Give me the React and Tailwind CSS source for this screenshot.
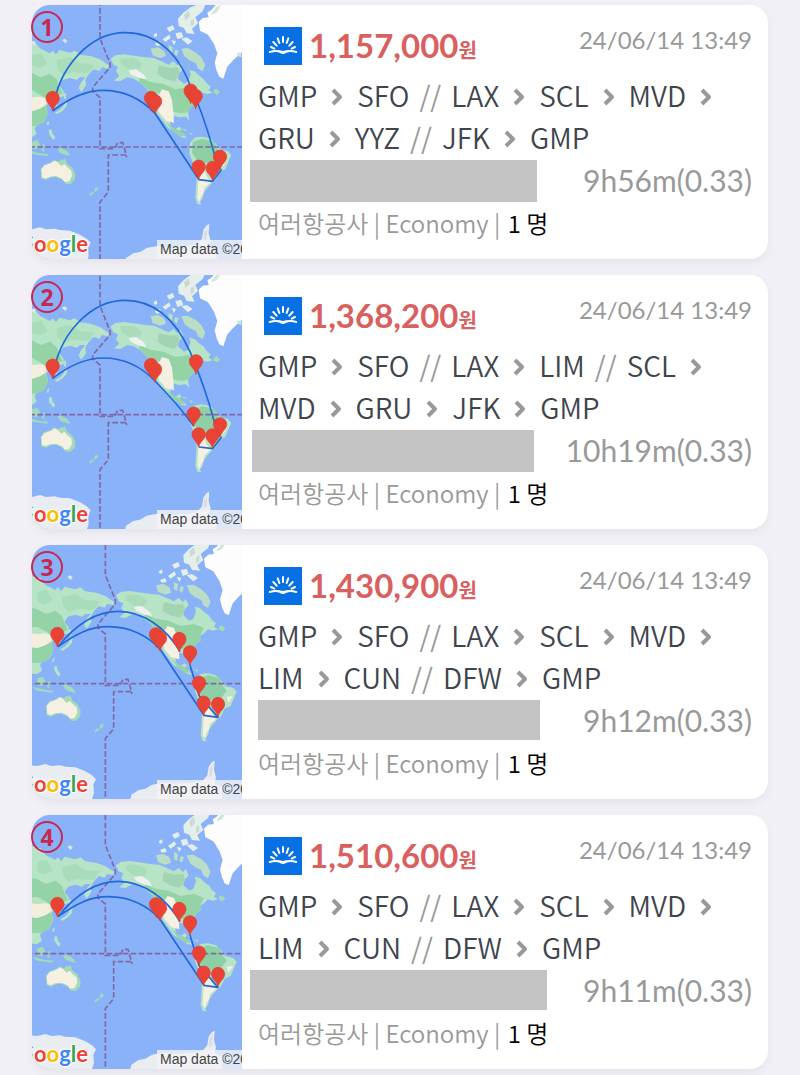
const PACIFIC_WEST = { x: 0, y: 0 }
const PACIFIC_LOW = { x: 0, y: -7 }
const PACIFIC_EAST = { x: 16, y: -10 }

const northernLoop = {
    pins: [[98, 294], [393, 294], [405, 304], [512, 272], [527, 288], [536, 500], [578, 504], [600, 470]],
    lines: [
        'M98 333C115 195 215 98 315 98C400 98 470 150 510 255Q550 340 583 462L600 508',
        'M98 333C150 292 200 271 250 271C310 271 365 298 405 340L537 539L578 544L605 508',
    ],
}

const limaLoop = {
    pins: [[98, 287], [393, 285], [405, 298], [528, 274], [521, 431], [536, 493], [577, 496], [600, 463]],
    lines: [
        'M98 325C115 188 215 91 315 91C400 91 465 145 510 245Q553 345 583 455L600 500',
        'M98 325C150 285 200 264 250 264C310 264 365 291 405 333Q470 398 521 468',
        'M537 531L578 536L605 500',
    ],
}

const cancunLoop = {
    pins: [[112, 282], [408, 283], [420, 294], [478, 297], [510, 337], [537, 428], [551, 488], [594, 492]],
    lines: [
        'M114 320C170 250 230 214 295 214C370 214 440 265 480 335',
        'M114 320C170 280 210 260 265 260C330 260 385 288 420 328L552 526L594 532L537 466L510 375',
    ],
}

const tickets = [
    {
        id: 1,
        price: '1,157,000',
        duration: '9h56m(0.33)',
        route: ['GMP', '>', 'SFO', '//', 'LAX', '>', 'SCL', '>', 'MVD', '>', 'GRU', '>', 'YYZ', '//', 'JFK', '>', 'GMP'],
        mask: '-ml-2 h-[42px] w-[287px]',
        view: PACIFIC_WEST,
        trip: northernLoop,
    },
    {
        id: 2,
        price: '1,368,200',
        duration: '10h19m(0.33)',
        route: ['GMP', '>', 'SFO', '//', 'LAX', '>', 'LIM', '//', 'SCL', '>', 'MVD', '>', 'GRU', '>', 'JFK', '>', 'GMP'],
        mask: '-ml-1.5 h-[42px] w-[282px]',
        view: PACIFIC_LOW,
        trip: limaLoop,
    },
    {
        id: 3,
        price: '1,430,900',
        duration: '9h12m(0.33)',
        route: ['GMP', '>', 'SFO', '//', 'LAX', '>', 'SCL', '>', 'MVD', '>', 'LIM', '>', 'CUN', '//', 'DFW', '>', 'GMP'],
        mask: 'h-[40px] w-[282px]',
        view: PACIFIC_EAST,
        trip: cancunLoop,
    },
    {
        id: 4,
        price: '1,510,600',
        duration: '9h11m(0.33)',
        route: ['GMP', '>', 'SFO', '//', 'LAX', '>', 'SCL', '>', 'MVD', '>', 'LIM', '>', 'CUN', '//', 'DFW', '>', 'GMP'],
        mask: '-ml-2 h-[40px] w-[297px]',
        view: PACIFIC_EAST,
        trip: cancunLoop,
    },
]

function Land() {
    return (
        <>
            {/* Asia */}
            <path fill="#b7e3c6" d="M-20 105L20 118L45 128L62 146L90 160L98 152L108 163L118 150L150 158L165 152L180 164L212 168L240 178L268 197L262 206L246 202L238 213L220 208L205 225L196 240L198 256L184 276L176 264L184 246L196 232L180 232L170 240L150 234L128 240L118 256L130 272L132 288L122 292L108 290L104 302L112 318L101 322L92 308L78 316L84 340L72 366L52 376L44 384L50 402L36 412L-20 410Z" />
            <path fill="#93d3a6" d="M-20 205L36 218L62 232L90 222L110 238L118 260L128 280L104 290L86 300L70 290L36 270L-20 275ZM-20 318L36 330L76 316L84 340L72 366L48 378L-20 380Z" />
            <path fill="#a9dcba" d="M110 180L150 172L180 190L222 194L206 220L160 216L130 226L112 205ZM36 165L64 160L82 190L60 204L36 196Z" />
            <path fill="#f3eedd" d="M-20 285L36 292L62 290L84 298L76 316L60 326L36 334L-20 330Z" />
            <path fill="#b7e3c6" d="M104 338L118 330L130 318L134 304L142 300L140 318L128 332L112 342ZM130 280L137 278L138 298L132 294ZM82 366L88 362L86 374L80 376ZM86 390L94 388L98 402L106 412L100 420L88 404Z" />
            <path fill="#a4dab5" d="M36 425L52 420L60 434L50 448L36 446ZM66 436L76 432L70 442L74 456L66 452ZM20 450L60 460L84 462L82 468L36 462ZM112 446L124 444L142 454L152 468L140 466L122 460Z" />
            {/* Oceania */}
            <path fill="#a4dab5" d="M62 508L72 494L90 488L102 480L116 484L124 478L130 480L134 474L142 492L156 502L166 522L164 540L152 552L138 552L128 540L110 532L94 532L78 540L64 536Z" />
            <path fill="#f5f0e2" d="M64 508L74 496L92 490L104 482L114 488L124 498L133 492L142 502L154 512L156 528L148 544L134 546L126 536L108 528L90 530L76 536L66 532Z" />
            <path fill="#a4dab5" d="M228 560L236 566L226 576L222 572ZM218 574L222 578L210 588L207 584Z" />
            {/* North America */}
            <path fill="#b7e3c6" d="M272 176L286 166L312 163L340 167L376 172L402 174L424 184L446 194L460 184L472 196L482 188L490 206L476 222L474 236L492 252L504 246L512 224L508 210L524 214L536 226L550 236L560 250L572 260L566 270L578 278L562 282L548 278L536 290L524 298L526 312L512 322L504 336L508 362L498 350L478 352L462 348L450 362L452 380L466 388L478 380L484 384L478 396L492 402L500 414L486 412L462 396L444 384L426 360L410 338L402 312L394 288L380 266L360 248L342 236L322 232L300 244L282 242L298 228L288 214L294 200L280 194Z" />
            <path fill="#93d3a6" d="M358 232L392 246L430 252L466 268L506 262L536 274L524 298L526 312L512 322L504 336L488 340L462 336L446 312L434 284L410 280L398 298L382 266L358 246Z" />
            <path fill="#a2d4b4" d="M416 196L450 204L474 202L480 220L464 244L434 236L412 222Z" />
            <path fill="#a9dcba" d="M300 176L340 174L366 190L358 208L324 206L304 192Z" />
            <path fill="#f5f0e2" d="M426 268L446 274L456 300L460 338L462 368L438 362L418 338L410 312L414 290Z" />
            <path fill="#eef1ee" d="M326 212L348 208L372 224L380 238L358 234L334 224Z" />
            <path fill="#93d3a6" d="M440 368L462 384L482 394L496 408L480 408L456 392Z" />
            <path fill="#a4dab5" d="M478 386L496 388L504 394L492 392ZM506 398L520 400L514 406ZM580 270L590 266L600 276L592 284L582 280Z" />
            {/* Arctic islands */}
            <path fill="#b9dec5" d="M484 146L504 144L528 158L544 172L556 196L548 214L534 206L528 190L510 182L494 170ZM392 146L414 142L432 152L438 168L420 174L398 166ZM446 136L458 142L456 162L446 158ZM466 148L476 152L470 168L462 162Z" />
            <path fill="#e3efe8" d="M474 56L490 38L512 22L530 15L556 15L548 34L526 52L534 70L516 86L524 102L500 100L492 84L476 78ZM440 84L458 76L464 88L448 96ZM466 100L484 96L490 112L472 118ZM428 118L448 104L452 114L436 126ZM400 104L410 98L412 108L404 112ZM484 116L500 112L518 124L504 134ZM454 120L468 124L462 136ZM404 130L420 124L424 136L410 138Z" />
            <path fill="#cbd9d4" d="M492 44L506 32L510 48L496 62ZM512 62L522 56L522 74L512 80Z" />
            <path fill="#dcecdf" d="M126 120L134 116L142 122L136 130ZM36 124L46 124L46 136L36 132Z" />
            {/* Greenland and Iceland */}
            <path fill="#fdfdfe" d="M536 66L548 54L566 52L562 38L574 30L590 12L700 8L700 150L664 158L640 180L622 200L610 236L598 230L590 212L584 188L592 160L582 132L564 104L540 92Z" />
            <path fill="#cfe8da" d="M572 44L590 20L604 15L590 38ZM650 160L664 156L664 172L652 168Z" />
            {/* South America */}
            <path fill="#b7e3c6" d="M510 428L526 412L548 410L572 416L586 430L600 448L624 454L634 466L626 484L616 508L598 516L586 540L572 552L560 566L552 578L548 594L540 606L544 614L532 612L526 594L528 566L530 530L532 506L518 486L508 460Z" />
            <path fill="#8ed0a5" d="M518 426L548 416L582 424L592 446L604 462L590 482L556 490L530 480L516 458Z" />
            <path fill="#f5f0e2" d="M536 518L552 506L556 522L572 548L554 562L550 580L542 592L540 606L532 594L534 560ZM604 480L622 478L610 498Z" />
            {/* Antarctica */}
            <path fill="#e9ecf0" d="M-20 684L36 688L60 682L78 688L104 686L120 690L150 692L180 704L200 716L212 728L204 744L206 768L196 800L-20 800ZM312 800L318 774L340 760L360 756L380 744L412 738L450 742L500 738L530 734L546 716L550 690L560 676L568 672L566 700L572 722L568 742L590 750L590 800Z" />
            <path fill="#d7dde5" d="M552 696L562 684L560 716L552 722Z" />
        </>
    )
}

function RouteMap({ view, trip }) {
    return (
        <svg viewBox="36 15 630 762" preserveAspectRatio="xMidYMid slice" className="absolute inset-0 h-full w-full" aria-hidden="true">
            <rect x="36" y="15" width="630" height="762" fill="#8ab2f8" />
            <g transform={`translate(${view.x} ${view.y})`}>
                <Land />
                <g fill="none" stroke="#8069a4" strokeWidth="5" strokeDasharray="17 7">
                    <path d="M-20 441H680" />
                    <path d="M240 0V115L270 190V202L218 262V274L240 292V446H284L293 428H308L314 448L320 472" />
                    <path d="M318 465H265V576L240 606V800" />
                </g>
            </g>
            <g fill="none" stroke="#2069dc" strokeWidth="5" strokeLinejoin="round">
                {trip.lines.map((d) => <path key={d} d={d} />)}
            </g>
            {trip.pins.map(([x, y]) => (
                <path
                    key={`${x}-${y}`}
                    transform={`translate(${x} ${y})`}
                    d="M0 39C-3 22 -20 16 -20 0A20 20 0 0 1 20 0C20 16 3 22 0 39Z"
                    fill="#e94335"
                    stroke="#d9402f"
                    strokeWidth="2"
                />
            ))}
        </svg>
    )
}

function MapPanel({ id, view, trip }) {
    return (
        <div className="relative w-[210px] shrink-0">
            <div className="absolute inset-0 overflow-hidden rounded-l-[18px]">
                <RouteMap view={view} trip={trip} />
                <div className="absolute right-[154px] bottom-0 font-['Lato'] text-[22px] leading-[30px] font-bold [text-shadow:0_0_2px_white,0_0_2px_white,0_0_3px_white,1px_1px_1px_white,-1px_-1px_1px_white]">
                    <span className="text-[#4285f4]">G</span>
                    <span className="text-[#ea4335]">o</span>
                    <span className="text-[#fbbc05]">o</span>
                    <span className="text-[#4285f4]">g</span>
                    <span className="text-[#34a853]">l</span>
                    <span className="text-[#ea4335]">e</span>
                </div>
                <div className="absolute right-0 bottom-0 w-[85px] overflow-hidden bg-[#f1f4f8]/80 pl-[3px] font-['Liberation_Sans'] text-[14px] leading-[19px] whitespace-nowrap text-[#444]">
                    Map data ©20
                </div>
            </div>
            <span className="absolute top-[6px] -left-px flex size-8 items-center justify-center rounded-full border-2 border-[#c62850] font-['Noto_Sans'] text-[23px] leading-none font-bold text-[#c62850]">
                {id}
            </span>
        </div>
    )
}

function AgencyLogo() {
    return (
        <svg viewBox="0 0 114 114" className="ml-[6px] size-[38px]" aria-hidden="true">
            <rect width="114" height="114" fill="#0770e3" />
            <g stroke="#fff" strokeWidth="6" strokeLinecap="round" fill="none">
                <path d="M57 30V45M41 34L46 48M73 34L68 48M28 45L38 56M86 45L76 56M21 60L31 65M93 60L83 65" />
            </g>
            <path fill="#fff" d="M15 73C28 68 42 67 57 72C72 67 86 68 99 73C101 77 98 79 94 77C84 74 75 74 67 77C60 82 54 82 47 77C39 74 30 74 20 77C16 79 13 77 15 73Z" />
        </svg>
    )
}

function Chevron() {
    return (
        <svg viewBox="0 0 12 18" className="mx-[14px] mt-1 h-[18px] w-[12px]" fill="none" stroke="#999" strokeWidth="4" aria-hidden="true">
            <path d="M2 2L9 9L2 16" strokeLinejoin="round" />
        </svg>
    )
}

function TicketCard({ ticket }) {
    return (
        <article className="flex rounded-[18px] bg-white shadow-[0_4px_10px_rgba(0,0,0,0.05)]">
            <MapPanel id={ticket.id} view={ticket.view} trip={ticket.trip} />

            <div className="min-w-0 flex-1 px-4 pt-[22px] pb-[15px]">
                <div className="flex h-[47px] items-start justify-between">
                    <div className="flex">
                        <AgencyLogo />
                        <p className="ml-[7px] font-['Lato','Noto_Sans_CJK_KR',sans-serif] text-[33px] leading-[36px] font-bold text-[#d9605f]">
                            {ticket.price}
                            <span className="text-[20px]">원</span>
                        </p>
                    </div>
                    <time className="font-['Lato',sans-serif] text-[24px] leading-[26px] text-[#999]">24/06/14 13:49</time>
                </div>

                <div className="flex flex-wrap items-center pb-[2px] font-['Noto_Sans_CJK_KR',sans-serif] text-[28px] leading-[42px] font-[350] text-[#3f454d]">
                    {ticket.route.map((part, i) => {
                        if (part === '>') return <Chevron key={i} />
                        if (part === '//') return <span key={i} className="mx-[10px] font-normal text-[#999]">//</span>
                        return <span key={i}>{part}</span>
                    })}
                </div>

                <div className="flex h-[42px] items-start justify-between">
                    <div className={`bg-[#c3c3c3] ${ticket.mask}`} />
                    <span className="font-['Lato',sans-serif] text-[30px] leading-[40px] text-[#999]">{ticket.duration}</span>
                </div>

                <p className="font-['Noto_Sans_CJK_KR',sans-serif] text-[24px] leading-[42px] font-[350] text-[#999]">
                    여러항공사 | Economy | <span className="ml-0.5 text-black">1 명</span>
                </p>
            </div>
        </article>
    )
}

function App() {
    return (
        <main className="min-h-screen bg-[#f0f0f6] px-8 pt-[5px] pb-[6px]">
            <div className="flex flex-col gap-4">
                {tickets.map((ticket) => <TicketCard key={ticket.id} ticket={ticket} />)}
            </div>
        </main>
    )
}

export default App
